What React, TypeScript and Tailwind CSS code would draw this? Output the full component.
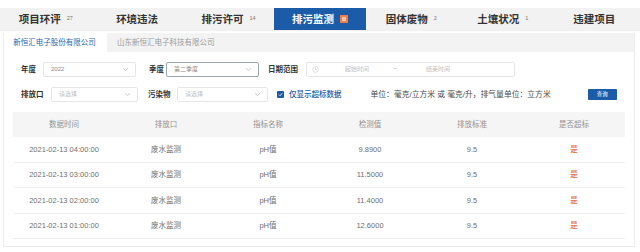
import React from "react";

const tabs: { name: string; badge?: string; active?: boolean }[] = [
  { name: "项目环评", badge: "27" },
  { name: "环境违法" },
  { name: "排污许可", badge: "14" },
  { name: "排污监测", active: true },
  { name: "固体废物", badge: "2" },
  { name: "土壤状况", badge: "1" },
  { name: "违建项目" },
];

const rows = [
  ["2021-02-13 04:00:00", "废水监测", "pH值", "9.8900", "9.5", "是"],
  ["2021-02-13 03:00:00", "废水监测", "pH值", "11.5000", "9.5", "是"],
  ["2021-02-13 02:00:00", "废水监测", "pH值", "11.4000", "9.5", "是"],
  ["2021-02-13 01:00:00", "废水监测", "pH值", "12.6000", "9.5", "是"],
];

const headers = ["数据时间", "排放口", "指标名称", "检测值", "排放标准", "是否超标"];

function Chevron() {
  return (
    <svg width="7" height="5" viewBox="0 0 7 5" className="shrink-0">
      <path d="M1 1.2 L3.5 3.6 L6 1.2" fill="none" stroke="#c4c4c4" strokeWidth="0.9" />
    </svg>
  );
}

function Select({ text, w, focused, placeholder }: { text: string; w: string; focused?: boolean; placeholder?: boolean }) {
  return (
    <div
      className={`${w} h-[15px] flex items-center justify-between pl-[7px] pr-[6px] rounded-[2px] border ${
        focused ? "border-[#9aa7b0]" : "border-[#e6e6e6]"
      } bg-white`}
    >
      <span className={`text-[6px] ${placeholder ? "text-[#c0c0c0]" : "text-[#8a8a8a]"}`}>{text}</span>
      <Chevron />
    </div>
  );
}

export default function App() {
  return (
    <div className="w-[640px] h-[252px] overflow-hidden bg-white font-['Liberation_Sans','Noto_Sans_CJK_SC',sans-serif]">
      <div className="h-[8px]" />
      {/* Top tabs */}
      <div className="flex h-[22px] bg-[#f2f2f2] shadow-[0_1px_1px_rgba(0,0,0,0.06)]">
        {tabs.map((t) => (
          <div
            key={t.name}
            className={`flex-1 flex items-center justify-center gap-[6px] ${t.active ? "bg-[#1b5ba7]" : ""}`}
          >
            <span
              className={`text-[10.5px] font-bold leading-none ${t.active ? "text-white" : "text-[#333]"}`}
            >
              {t.name}
            </span>
            {t.badge && <span className="text-[5.5px] text-[#777] leading-none">{t.badge}</span>}
            {t.active && (
              <span className="w-[8px] h-[8px] bg-[#ef7d45] flex items-center justify-center">
                <span className="w-[4px] h-[4px] bg-[#f9c4a3]" />
              </span>
            )}
          </div>
        ))}
      </div>

      {/* Panel */}
      <div className="mx-[3px] mt-[3px] w-[632px] border-x border-b border-[#ececec] pb-[7px]">
        {/* Company tabs */}
        <div className="flex h-[19px] items-stretch">
          <div className="w-[101px] flex items-center justify-center bg-white text-[7.5px] text-[#2a66ad]">
            新恒汇电子股份有限公司
          </div>
          <div className="flex-1 ml-[2px] flex items-center pl-[10px] bg-[#f3f3f3] text-[7.5px] text-[#9a9a9a]">
            山东新恒汇电子科技有限公司
          </div>
        </div>

        {/* Filter row 1 */}
        <div className="flex items-center mt-[10px] pl-[17px] h-[15px]">
          <span className="text-[7.5px] font-bold text-[#333] w-[22px]">年度</span>
          <Select text="2022" w="w-[93px]" />
          <span className="ml-[13px] text-[7.5px] font-bold text-[#333] w-[17px]">季度</span>
          <Select text="第二季度" w="w-[93px]" focused />
          <span className="ml-[9px] text-[7.5px] font-bold text-[#333] w-[38px]">日期范围</span>
          <div className="w-[209px] h-[15px] rounded-[2px] border border-[#e6e6e6] flex items-center pl-[5px]">
            <svg width="7" height="7" viewBox="0 0 8 8" className="shrink-0">
              <circle cx="4" cy="4" r="3.2" fill="none" stroke="#cfcfcf" strokeWidth="0.8" />
              <path d="M4 2.2 V4 H5.4" fill="none" stroke="#cfcfcf" strokeWidth="0.8" />
            </svg>
            <span className="ml-[26px] text-[6px] text-[#c0c0c0] w-[48px]">起始时间</span>
            <span className="text-[7px] text-[#bbb] w-[33px]">~</span>
            <span className="text-[6px] text-[#c0c0c0]">结束时间</span>
          </div>
        </div>

        {/* Filter row 2 */}
        <div className="flex items-center mt-[10px] pl-[17px] h-[15px]">
          <span className="text-[7.5px] font-bold text-[#333] w-[30px]">排放口</span>
          <Select text="请选择" w="w-[87px]" placeholder />
          <span className="ml-[10px] text-[7.5px] font-bold text-[#333] w-[29px]">污染物</span>
          <Select text="请选择" w="w-[91px]" placeholder />
          <span className="ml-[9px] w-[7px] h-[7px] rounded-[1px] bg-[#1b5ba7] flex items-center justify-center">
            <svg width="5" height="5" viewBox="0 0 6 6">
              <path d="M1 3 L2.5 4.5 L5 1.5" fill="none" stroke="white" strokeWidth="1" />
            </svg>
          </span>
          <span className="ml-[5px] text-[7.5px] text-[#1b5ba7] font-medium">仅显示超标数据</span>
          <span className="ml-[29px] text-[7.8px] text-[#4a4a4a]">单位：毫克/立方米 或 毫克/升，排气量单位：立方米</span>
          <button className="ml-[37px] w-[29px] h-[11px] bg-[#1b5ba7] rounded-[1px] text-white text-[5.5px] flex items-center justify-center">
            查询
          </button>
        </div>

        {/* Table */}
        <div className="mx-[9px] mt-[10px]">
          <div className="grid grid-cols-6 h-[25px] bg-[#f5f5f5] items-center">
            {headers.map((h) => (
              <div key={h} className="text-center text-[7.5px] text-[#929292]">
                {h}
              </div>
            ))}
          </div>
          {rows.map((r, i) => (
            <div key={i} className="grid grid-cols-6 h-[25.6px] items-center border-b border-[#efefef]">
              {r.map((c, j) => (
                <div
                  key={j}
                  className={`text-center text-[7.5px] ${
                    j === 5 ? "text-[#e8703f] font-medium" : "text-[#6f6f6f]"
                  }`}
                >
                  {c}
                </div>
              ))}
            </div>
          ))}
        </div>
      </div>
    </div>
  );
}
